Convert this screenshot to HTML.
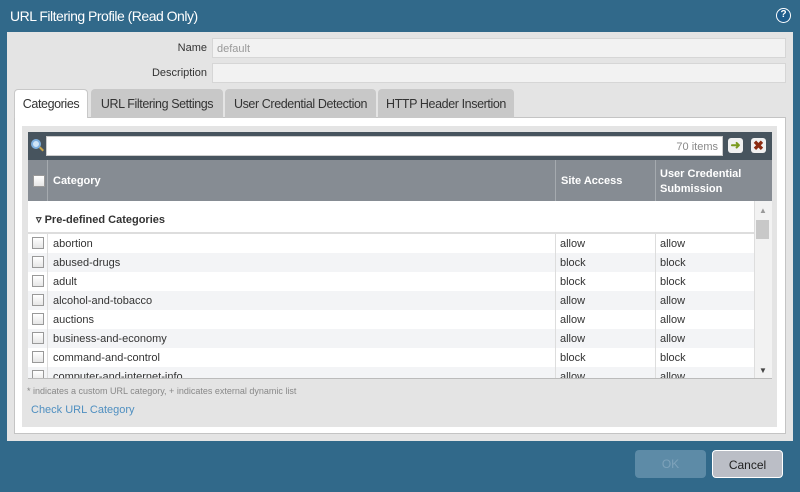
<!DOCTYPE html>
<html><head><style>
*{box-sizing:border-box;margin:0;padding:0}
body{width:800px;height:492px;background:#31698a;font-family:"Liberation Sans",sans-serif;position:relative;overflow:hidden}
.abs{position:absolute}
.title{left:10px;top:8px;color:#fff;font-size:14px;letter-spacing:-0.5px}
.body{left:7px;top:32px;width:786px;height:409px;background:#e4e4e4}
.lbl{font-size:11px;color:#333;text-align:right;width:200px}
.inp{left:212px;width:574px;height:20px;background:#f2f2f2;border:1px solid #d6d6d6;font-size:11px;color:#999;padding:4px 4px}
.tab{top:89px;height:29px;border:1px solid #c8c8c8;border-bottom:none;border-radius:4px 4px 0 0;background:#c8c8c8;font-size:12.5px;color:#333;text-align:center;padding-top:7px;letter-spacing:-0.4px}
.tab.on{background:#fff;height:29px;z-index:2}
.panel{left:14px;top:117px;width:772px;height:317px;background:#fff;border:1px solid #c4c4c4}
.inner{left:22px;top:126px;width:755px;height:301px;background:#e4e4e4}
.sbar{left:28px;top:132px;width:744px;height:28px;background:#47545e}
.hdr{left:28px;top:160px;width:744px;height:41px;background:#868c93;color:#fff;font-size:11px;font-weight:bold}
.grid{left:28px;top:201px;width:744px;height:177px;background:#fff;overflow:hidden}
.row{position:absolute;left:0;width:726px;height:19px;font-size:11px;color:#333}
.row.alt{background:#f3f4f6}
.row span{position:absolute;top:4px}
.cb{position:absolute;left:4px;top:3px;width:12px;height:12px;border:1px solid #999;background:linear-gradient(#fff,#e6e6e6)}
.vl{position:absolute;top:0;width:1px;height:19px;background:#ddd}
.btn{top:450px;height:28px;border-radius:4px;font-size:12px;text-align:center;padding-top:7px}
</style></head><body>
<div class="abs title">URL Filtering Profile (Read Only)</div>
<div class="abs" style="left:776px;top:8px;width:15px;height:15px;border-radius:50%;background:#1f5d8d;border:1.5px solid #fff;color:#fff;font-size:10px;font-weight:bold;text-align:center;line-height:12px">?</div>
<div class="abs body"></div>
<div class="abs lbl" style="left:7px;top:42px">Name</div>
<div class="abs inp" style="top:38px">default</div>
<div class="abs lbl" style="left:7px;top:67px">Description</div>
<div class="abs inp" style="top:63px"></div>
<div class="abs panel"></div>
<div class="abs tab on" style="left:14px;width:74px">Categories</div>
<div class="abs tab" style="left:91px;width:132px">URL Filtering Settings</div>
<div class="abs tab" style="left:225px;width:151px">User Credential Detection</div>
<div class="abs tab" style="left:378px;width:136px">HTTP Header Insertion</div>
<div class="abs inner"></div>
<div class="abs sbar">
 <div class="abs" style="left:3px;top:7px;width:10px;height:10px;border-radius:50%;border:2px solid #7fb0e0;background:#cfe4f7"></div>
 <div class="abs" style="left:11px;top:16px;width:5px;height:2px;background:#c9a64c;transform:rotate(45deg)"></div>
 <div class="abs" style="left:18px;top:4px;width:677px;height:20px;background:#fff;border:1px solid #ccc;font-size:11px;color:#888;text-align:right;padding:4px 4px">70 items</div>
 <div class="abs" style="left:700px;top:6px;width:15px;height:15px;background:#f0f0f0;border-radius:3px;color:#7a9a1e;font-size:12px;font-weight:bold;text-align:center;line-height:14px">➜</div>
 <div class="abs" style="left:723px;top:6px;width:15px;height:15px;background:#f0f0f0;border-radius:3px;color:#8b2a10;font-size:13px;font-weight:bold;text-align:center;line-height:15px">✖</div>
</div>
<div class="abs hdr">
 <div class="cb" style="left:5px;top:15px"></div>
 <div class="abs" style="left:19px;top:0;width:1px;height:41px;background:#a5aaaf"></div>
 <div class="abs" style="left:25px;top:15px">Category</div>
 <div class="abs" style="left:527px;top:0;width:1px;height:41px;background:#a5aaaf"></div>
 <div class="abs" style="left:533px;top:15px">Site Access</div>
 <div class="abs" style="left:627px;top:0;width:1px;height:41px;background:#a5aaaf"></div>
 <div class="abs" style="left:632px;top:7px;line-height:15px">User Credential<br>Submission</div>
</div>
<div class="abs grid">
 <div class="abs" style="left:8px;top:12px;font-size:11px;font-weight:bold;color:#333">▿ Pre-defined Categories</div>
 <div class="abs" style="left:0;top:31px;width:726px;height:2px;background:#ddd"></div>
 <div class="abs" style="left:726px;top:0;width:18px;height:177px;background:#f2f2f2;border-left:1px solid #ddd"></div>
 <div class="abs" style="left:731px;top:5px;font-size:8px;color:#999">▲</div>
 <div class="abs" style="left:728px;top:19px;width:13px;height:19px;background:#c8c8c8"></div>
 <div class="abs" style="left:731px;top:165px;font-size:8px;color:#444">▼</div>
 <div class="row" style="top:33px"><div class="cb"></div><div class="vl" style="left:19px"></div><span style="left:25px">abortion</span><div class="vl" style="left:527px"></div><span style="left:532px">allow</span><div class="vl" style="left:627px"></div><span style="left:632px">allow</span></div>
 <div class="row alt" style="top:52px"><div class="cb"></div><div class="vl" style="left:19px"></div><span style="left:25px">abused-drugs</span><div class="vl" style="left:527px"></div><span style="left:532px">block</span><div class="vl" style="left:627px"></div><span style="left:632px">block</span></div>
 <div class="row" style="top:71px"><div class="cb"></div><div class="vl" style="left:19px"></div><span style="left:25px">adult</span><div class="vl" style="left:527px"></div><span style="left:532px">block</span><div class="vl" style="left:627px"></div><span style="left:632px">block</span></div>
 <div class="row alt" style="top:90px"><div class="cb"></div><div class="vl" style="left:19px"></div><span style="left:25px">alcohol-and-tobacco</span><div class="vl" style="left:527px"></div><span style="left:532px">allow</span><div class="vl" style="left:627px"></div><span style="left:632px">allow</span></div>
 <div class="row" style="top:109px"><div class="cb"></div><div class="vl" style="left:19px"></div><span style="left:25px">auctions</span><div class="vl" style="left:527px"></div><span style="left:532px">allow</span><div class="vl" style="left:627px"></div><span style="left:632px">allow</span></div>
 <div class="row alt" style="top:128px"><div class="cb"></div><div class="vl" style="left:19px"></div><span style="left:25px">business-and-economy</span><div class="vl" style="left:527px"></div><span style="left:532px">allow</span><div class="vl" style="left:627px"></div><span style="left:632px">allow</span></div>
 <div class="row" style="top:147px"><div class="cb"></div><div class="vl" style="left:19px"></div><span style="left:25px">command-and-control</span><div class="vl" style="left:527px"></div><span style="left:532px">block</span><div class="vl" style="left:627px"></div><span style="left:632px">block</span></div>
 <div class="row alt" style="top:166px"><div class="cb"></div><div class="vl" style="left:19px"></div><span style="left:25px">computer-and-internet-info</span><div class="vl" style="left:527px"></div><span style="left:532px">allow</span><div class="vl" style="left:627px"></div><span style="left:632px">allow</span></div>
</div>
<div class="abs" style="left:28px;top:378px;width:744px;height:1px;background:#bbb"></div>
<div class="abs" style="left:27px;top:386px;font-size:9px;color:#888">* indicates a custom URL category, + indicates external dynamic list</div>
<div class="abs" style="left:31px;top:404px;font-size:11px;color:#4f8fc0">Check URL Category</div>
<div class="abs btn" style="left:635px;width:71px;background:#5d8ba7;color:#7ea2ba">OK</div>
<div class="abs btn" style="left:712px;width:71px;background:#bbbec6;border:1.5px solid #fff;color:#222">Cancel</div>
</body></html>
